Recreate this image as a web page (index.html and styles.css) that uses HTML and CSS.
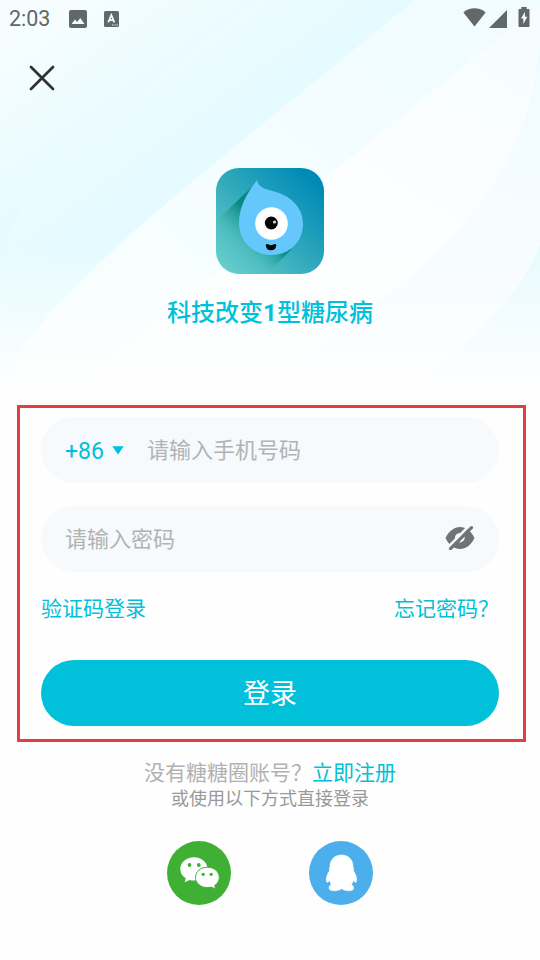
FILE: index.html
```
<!DOCTYPE html>
<html lang="zh-CN">
<head>
<meta charset="utf-8">
<meta name="viewport" content="width=device-width, initial-scale=1">
<title>登录</title>
<link rel="stylesheet" href="styles.css">
</head>
<body>
<svg class="backdrop" viewBox="0 0 540 410" aria-hidden="true">
  <defs>
    <linearGradient id="corner" gradientUnits="userSpaceOnUse" x1="40" y1="30" x2="125" y2="150">
      <stop offset="0" stop-color="#f5fdff"/><stop offset="1" stop-color="#e6fbff"/>
    </linearGradient>
    <linearGradient id="bandA" gradientUnits="userSpaceOnUse" x1="150" y1="80" x2="205" y2="155">
      <stop offset="0" stop-color="#ecfcff"/><stop offset="1" stop-color="#e5fbff"/>
    </linearGradient>
    <linearGradient id="bandB" gradientUnits="userSpaceOnUse" x1="470" y1="20" x2="220" y2="290">
      <stop offset="0" stop-color="#f0fcff"/><stop offset="1" stop-color="#f6feff"/>
    </linearGradient>
    <linearGradient id="bandC" gradientUnits="userSpaceOnUse" x1="510" y1="50" x2="380" y2="250">
      <stop offset="0" stop-color="#f7fdff"/><stop offset="1" stop-color="#fdfeff"/>
    </linearGradient>
    <linearGradient id="bandD" gradientUnits="userSpaceOnUse" x1="540" y1="60" x2="500" y2="230">
      <stop offset="0" stop-color="#effcff"/><stop offset="1" stop-color="#f7fcff"/>
    </linearGradient>
    <linearGradient id="fade" x1="0" y1="0" x2="0" y2="1">
      <stop offset="0.6" stop-color="#fefefe" stop-opacity="0"/><stop offset="0.95" stop-color="#fefefe"/>
    </linearGradient>
  </defs>
  <rect width="540" height="410" fill="url(#corner)"/>
  <path d="M258 0C205 38 145 85 85 139C40 180 12 208 6 250V410H540V0Z" fill="url(#bandA)"/>
  <path d="M415 0L250 134C180 193 60 285 15 360V410H540V0Z" fill="url(#bandB)"/>
  <path d="M540 6L500 37L325 178L110 362L60 410H540Z" fill="url(#bandC)"/>
  <path d="M540 42C534 110 515 155 482 201C450 243 400 290 340 328L220 410H540Z" fill="url(#bandD)"/>
  <path d="M540 245C525 282 500 312 465 345L390 410H540Z" fill="#e7fbff"/>
  <rect width="540" height="410" fill="url(#fade)"/>
</svg>

<main class="screen">
  <header class="status">
    <div class="status-left">
      <span class="clock">2:03</span>
      <svg class="picture" viewBox="0 0 18 18"><rect width="18" height="18" rx="2" fill="#626767"/><path d="M2.500 14L6 9.500L8.200 12L11.300 8L15.500 14Z" fill="#f3fdff"/></svg>
      <svg class="keyboard" viewBox="0 0 15 16"><rect width="15" height="16" rx="1.600" fill="#626767"/><path d="M4.300 11.400L7.300 4L10.300 11.400M5.300 9.100H9.300" fill="none" stroke="#f3fdff" stroke-width="1.700"/><path d="M8 14H9.300M10.400 14H11.700M12.600 14H13.900" stroke="#f3fdff" stroke-width="1.200"/></svg>
    </div>
    <div class="status-right">
      <svg class="wifi" viewBox="0 0 23 19"><path d="M.4 4.500C6.500-1.100 16.500-1.100 22.600 4.500L11.500 18.600Z" fill="#626767"/></svg>
      <svg class="signal" viewBox="0 0 18 18"><path d="M0 18L18 0V18Z" fill="#626767"/></svg>
      <svg class="battery" viewBox="0 0 12 20"><path d="M3.300 0H8.700V2H10.500Q11.500 2 11.500 3V19Q11.500 20 10.500 20H1.500Q.5 20 .5 19V3Q.5 2 1.500 2H3.300Z" fill="#626767"/><path d="M7 4.700L3 11.500H5.300V17L9.300 9.700H6.900Z" fill="#f3fdff"/></svg>
    </div>
  </header>

  <button class="close" aria-label="关闭">
    <svg viewBox="0 0 26 26"><path d="M2 2L24 24M24 2L2 24" fill="none" stroke="#303030" stroke-width="2.700" stroke-linecap="round"/></svg>
  </button>

  <section class="brand">
    <svg class="logo" viewBox="0 0 108 106">
      <defs>
        <linearGradient id="tile" x1="1" y1="0" x2="0" y2="1">
          <stop offset="0.12" stop-color="#008bb7"/><stop offset="0.5" stop-color="#2fa8bb"/><stop offset="1" stop-color="#6fd3cd"/>
        </linearGradient>
        <linearGradient id="shade" gradientUnits="userSpaceOnUse" x1="38" y1="48" x2="12" y2="76">
          <stop offset="0" stop-color="#06877f"/><stop offset="0.8" stop-color="#4ebdb5" stop-opacity="0.35"/><stop offset="1" stop-color="#62c9c5" stop-opacity="0"/>
        </linearGradient>
        <linearGradient id="shadeLow" gradientUnits="userSpaceOnUse" x1="65" y1="82" x2="43" y2="103">
          <stop offset="0" stop-color="#0b918c"/><stop offset="1" stop-color="#5ac5c0" stop-opacity="0"/>
        </linearGradient>
        <clipPath id="tileClip"><rect width="108" height="106" rx="23"/></clipPath>
      </defs>
      <g clip-path="url(#tileClip)">
        <rect width="108" height="106" fill="url(#tile)"/>
        <path d="M38 17L0 53V106H30L46 85Z" fill="url(#shade)"/>
        <path d="M76 81L51 106H20L36 78Z" fill="url(#shadeLow)"/>
        <path d="M41 12C42 20 50 21 60 24C76 29 87 40 87 56C87 74 73 87 55 87C37 87 23 73 23 55C23 39 31 25 41 12Z" fill="#66c7fc"/>
      </g>
      <circle cx="55.500" cy="55.500" r="16.300" fill="#fff"/>
      <circle cx="55.300" cy="55" r="6.500" fill="#050505"/>
      <circle cx="58.500" cy="54" r="1.600" fill="#d8d8d8"/>
      <path d="M49.800 77Q50.200 75.300 52.300 76.200Q55 78.200 57.800 76.200Q60 75.300 60.300 77.200Q60 82.300 55 82.300Q50 82.300 49.800 77Z" fill="#080808"/>
    </svg>
    <h1 class="slogan">科技改变<b>1</b>型糖尿病</h1>
  </section>

  <form class="login">
    <div class="field">
      <span class="code">+86</span>
      <svg class="caret" viewBox="0 0 12 9"><path d="M.3.300H11.700L6 8.500Z" fill="#00c0da"/></svg>
      <span class="hint">请输入手机号码</span>
    </div>
    <div class="field">
      <span class="hint">请输入密码</span>
      <svg class="eye" viewBox="0 0 30 24">
        <path d="M.5 12C4 5 9 1 15 1S26 5 29.500 12C26 19 21 23 15 23S4 19 .5 12Z" fill="#707274"/>
        <path d="M10.300 14C9 9.500 11.500 6.500 16.500 7L19.500 9.500C20.500 13 18.500 16 14.500 16.500Z" fill="#f6fafc"/>
        <path d="M2.500 22L24 0" stroke="#f6fafc" stroke-width="2.800"/>
        <path d="M5.500 22.700L26.500 1.700" stroke="#707274" stroke-width="3.200" stroke-linecap="round"/>
      </svg>
    </div>
    <div class="links"><a>验证码登录</a><a>忘记密码？</a></div>
    <button type="button" class="submit">登录</button>
  </form>

  <p class="register">没有糖糖圈账号？<a>立即注册</a></p>
  <p class="alternative">或使用以下方式直接登录</p>
  <div class="social">
    <svg viewBox="0 0 64 64" role="img" aria-label="微信">
      <circle cx="32" cy="32" r="32" fill="#40b035"/>
      <path d="M27 16.200C19.200 16.200 13.300 21.300 13.300 28C13.300 32 15.500 35.300 18.700 37.300L17.700 41.200L22.700 38.900C24.100 39.300 25.500 39.500 27 39.500C34.600 39.500 40.600 34.300 40.600 28S34.600 16.200 27 16.200Z" fill="#fff"/>
      <path d="M40.500 26.200C33.700 26.200 28.500 30.600 28.500 36.400S33.700 46.600 40.500 46.600C41.800 46.600 43.300 46.400 44.400 46.100L48.500 48.200L47.700 44.500C50.600 42.600 52.300 39.600 52.300 36.400C52.300 30.600 47.200 26.200 40.500 26.200Z" fill="#fff" stroke="#40b035" stroke-width="1"/>
      <g fill="#40b035"><circle cx="22.500" cy="24" r="1.900"/><circle cx="31.800" cy="24" r="1.900"/><circle cx="36.200" cy="33.300" r="1.600"/><circle cx="44.200" cy="33.300" r="1.600"/></g>
    </svg>
    <svg viewBox="0 0 64 64" role="img" aria-label="QQ">
      <circle cx="32" cy="32" r="32" fill="#4caeea"/>
      <path d="M32.500 14C25 14 20.900 19.300 21 25.500C20.500 27 20.200 28.300 20.600 29.700C18.200 33 16.800 37 17.400 40.200C17.700 42 19 41.600 20.700 39.300C21 41 21.400 42.300 22.300 43.700C20.100 44.500 19.600 46.500 20.300 48.100C21.300 50.500 29 50.300 32.500 47.700C36.500 50.300 43.800 50.400 44.500 48C44.900 46.300 44.200 44.500 42.300 43.700C43.400 42.300 44 41 44.300 39.300C46 41.600 47.200 42 47.500 40.200C48 36.800 46.700 33 44.400 29.700C44.800 28.200 44.500 27 44 25.500C44.100 19.300 40 14 32.500 14Z" fill="#fff" stroke="#fff" stroke-width="0.600"/>
    </svg>
  </div>
</main>
</body>
</html>
```
FILE: styles.css
```
* {
  box-sizing: border-box;
}

body {
  margin: 0;
  background: #fefefe;
  font-family: Roboto, "Noto Sans CJK SC", sans-serif;
}

svg {
  display: block;
  flex: none;
}

button {
  border: 0;
  padding: 0;
  background: none;
  font-family: inherit;
}

h1,
p {
  margin: 0;
}

.backdrop {
  position: absolute;
  inset: 0 0 auto;
  z-index: -1;
  width: 540px;
  height: 410px;
}

.screen {
  display: flex;
  flex-direction: column;
  width: 540px;
  height: 960px;
}

.status {
  display: flex;
  justify-content: space-between;
  height: 37px;
  padding: 0 10px 0 9px;
}

.status-left,
.status-right {
  display: flex;
  align-items: center;
}

.clock {
  width: 60px;
  color: #626767;
  font-size: 21.500px;
}

.picture {
  width: 18px;
  height: 18px;
}

.keyboard {
  width: 15px;
  height: 16px;
  margin-left: 17px;
}

.wifi {
  width: 23px;
  height: 19px;
  margin-top: -2px;
}

.signal {
  width: 18px;
  height: 18px;
  margin-left: 3px;
}

.battery {
  width: 12px;
  height: 20px;
  margin: -3px 0 0 11px;
}

.close {
  align-self: flex-start;
  width: 26px;
  height: 26px;
  margin: 28px 0 0 29px;
}

.brand {
  display: flex;
  flex-direction: column;
  align-items: center;
  margin-top: 77px;
}

.logo {
  width: 108px;
  height: 106px;
}

.slogan {
  margin-top: 21px;
  color: #00c0da;
  font-size: 24px;
  font-weight: 500;
  line-height: 36px;
}

.slogan b {
  font-weight: 700;
}

.login {
  width: 509px;
  height: 337px;
  margin: 74px 0 0 17px;
  padding: 9px 24px 0 21px;
  border: 3px solid #e63e3f;
}

.field {
  display: flex;
  align-items: center;
  height: 66px;
  margin-bottom: 23px;
  padding: 0 24px;
  border-radius: 33px;
  background: #f6fafc;
}

.code {
  width: 47px;
  padding-top: 2px;
  color: #00c0da;
  font-size: 23px;
}

.caret {
  width: 12px;
  height: 9px;
  margin-right: 23px;
}

.hint {
  flex: 1;
  padding-bottom: 4px;
  color: #b1b3b3;
  font-size: 22px;
}

.eye {
  width: 30px;
  height: 24px;
  margin-top: -2px;
}

.links {
  display: flex;
  justify-content: space-between;
  height: 65px;
  margin-top: -2px;
  color: #00c0da;
  font-size: 21px;
  line-height: 32px;
}

.submit {
  display: block;
  width: 458px;
  height: 66px;
  margin-top: 2px;
  padding-bottom: 3px;
  border-radius: 33px;
  background: #00c0da;
  color: #fff;
  font-size: 27px;
}

.register {
  margin-top: 15px;
  color: #b1b1b1;
  font-size: 21px;
  line-height: 32px;
  text-align: center;
}

.register a {
  color: #00c0da;
}

.alternative {
  margin-top: -3px;
  color: #999;
  font-size: 18px;
  line-height: 26px;
  text-align: center;
}

.social {
  display: flex;
  justify-content: center;
  gap: 78px;
  margin: 29px 1px 0 0;
}

.social svg {
  width: 64px;
  height: 64px;
}
```
